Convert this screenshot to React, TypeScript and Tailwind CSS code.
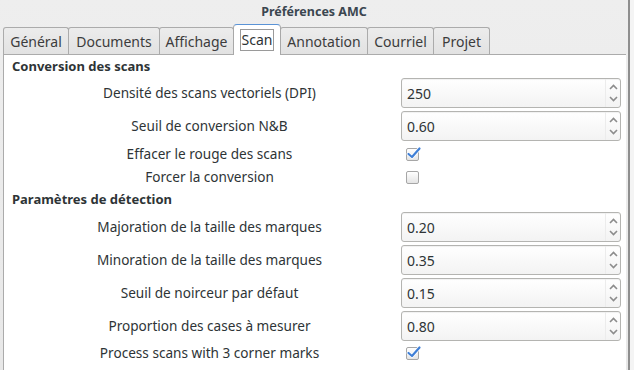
import React from "react";

const FONT = "font-['Noto_Sans','DejaVu_Sans',sans-serif]";

interface TabDef {
  label: string;
  width: string;
}

const tabs: TabDef[] = [
  { label: "Général", width: "w-[66px]" },
  { label: "Documents", width: "w-[92px]" },
  { label: "Affichage", width: "w-[75px]" },
  { label: "Scan", width: "w-[48px]" },
  { label: "Annotation", width: "w-[88px]" },
  { label: "Courriel", width: "w-[67px]" },
  { label: "Projet", width: "w-[57px]" },
];

const Chevron = ({ up }: { up?: boolean }) => (
  <svg width="9" height="6" viewBox="0 0 9 6" className="block">
    <path
      d={up ? "M1 5 L4.5 1.5 L8 5" : "M1 1 L4.5 4.5 L8 1"}
      fill="none"
      stroke="#8c8c8c"
      strokeWidth="1.6"
    />
  </svg>
);

const SpinBox = ({ value }: { value: string }) => (
  <div className="flex h-[30px] w-[220px] rounded-[3px] border border-[#b4b4b1] bg-gradient-to-b from-[#ffffff] to-[#f3f3f3] shadow-[inset_0_1px_1px_rgba(0,0,0,0.06)]">
    <div className="flex flex-1 items-center pl-[5px] text-[14px] text-[#2e3436]">
      {value}
    </div>
    <div className="flex w-[15px] flex-col items-center justify-between border-l border-[#ececec] py-[5px]">
      <Chevron up />
      <Chevron />
    </div>
  </div>
);

const CheckBox = ({ checked }: { checked?: boolean }) => (
  <div className="relative ml-[5px] h-[13px] w-[13px] rounded-[2px] border border-[#a6a6a6] bg-gradient-to-b from-[#ffffff] to-[#e4e4e4]">
    {checked && (
      <svg
        width="16"
        height="14"
        viewBox="0 0 16 14"
        className="absolute left-[-1px] top-[-3px]"
      >
        <path
          d="M2.5 8 L6 11 L13.5 2.5"
          fill="none"
          stroke="#ffffff"
          strokeWidth="3.6"
          strokeLinecap="round"
          strokeLinejoin="round"
        />
        <path
          d="M2.5 8 L6 11 L13.5 2.5"
          fill="none"
          stroke="#3f7fd6"
          strokeWidth="2.2"
          strokeLinecap="round"
          strokeLinejoin="round"
        />
      </svg>
    )}
  </div>
);

const SpinRow = ({ label, value }: { label: string; value: string }) => (
  <div className="flex h-[30px] items-center">
    <div className="w-[383px] text-center">{label}</div>
    <SpinBox value={value} />
  </div>
);

const CheckRow = ({ label, checked }: { label: string; checked?: boolean }) => (
  <div className="flex h-[23px] items-center">
    <div className="w-[383px] text-center">{label}</div>
    <CheckBox checked={checked} />
  </div>
);

const SectionTitle = ({ children }: { children: React.ReactNode }) => (
  <div className="flex h-[22px] items-center pl-[8px] text-[13px] font-bold">
    {children}
  </div>
);

export default function App() {
  return (
    <div
      className={`flex h-[370px] w-[634px] overflow-hidden bg-[#f2f2f2] ${FONT}`}
    >
      {/* main window */}
      <div className="flex h-full w-[628px] flex-col bg-gradient-to-b from-[#eeeeee] to-[#e8e8e8]">
        {/* title bar */}
        <div className="flex h-[24px] items-center justify-center pt-[1px] text-[12.5px] font-bold text-[#3b4650]">
          Préférences AMC
        </div>

        {/* tabs */}
        <div className="flex h-[30px] items-end pl-[3px]">
          {tabs.map((t) =>
            t.label === "Scan" ? (
              <div
                key={t.label}
                className={`${t.width} relative z-10 -mb-px -ml-px flex h-[31px] items-center justify-center rounded-t-[4px] border border-b-0 border-[#a8a8a8] border-t-[#5a93d6] bg-white text-[14px] text-[#2e3436]`}
              >
                <span className="border border-[#9a9a9a] px-[1px] leading-[20px]">
                  {t.label}
                </span>
              </div>
            ) : (
              <div
                key={t.label}
                className={`${t.width} -ml-px flex h-[27px] items-center justify-center rounded-t-[3px] border border-b-0 border-[#ababab] bg-gradient-to-b from-[#ececec] to-[#e2e2e2] text-[14px] text-[#3c3c3c] first:ml-0`}
              >
                {t.label}
              </div>
            )
          )}
        </div>

        {/* page */}
        <div className="ml-[3px] mr-[2px] flex-1 border-l border-t border-[#ababab] bg-white pt-[1px] text-[13.6px] text-[#2e3436]">
          <SectionTitle>Conversion des scans</SectionTitle>
          <div className="flex flex-col gap-[3px] pl-[14px]">
            <SpinRow label="Densité des scans vectoriels (DPI)" value="250" />
            <SpinRow label="Seuil de conversion N&B" value="0.60" />
          </div>
          <div className="mt-[2px] pl-[14px]">
            <CheckRow label="Effacer le rouge des scans" checked />
            <CheckRow label="Forcer la conversion" />
          </div>
          <SectionTitle>Paramètres de détection</SectionTitle>
          <div className="mt-[1px] flex flex-col gap-[3px] pl-[14px]">
            <SpinRow label="Majoration de la taille des marques" value="0.20" />
            <SpinRow label="Minoration de la taille des marques" value="0.35" />
            <SpinRow label="Seuil de noirceur par défaut" value="0.15" />
            <SpinRow label="Proportion des cases à mesurer" value="0.80" />
          </div>
          <div className="mt-[1px] pl-[14px]">
            <CheckRow label="Process scans with 3 corner marks" checked />
          </div>
        </div>
      </div>

      {/* window edge and what lies behind */}
      <div className="h-full w-[2px] bg-[#8e8e8e]" />
      <div className="h-full flex-1 bg-[#f4f4f4]" />
    </div>
  );
}
